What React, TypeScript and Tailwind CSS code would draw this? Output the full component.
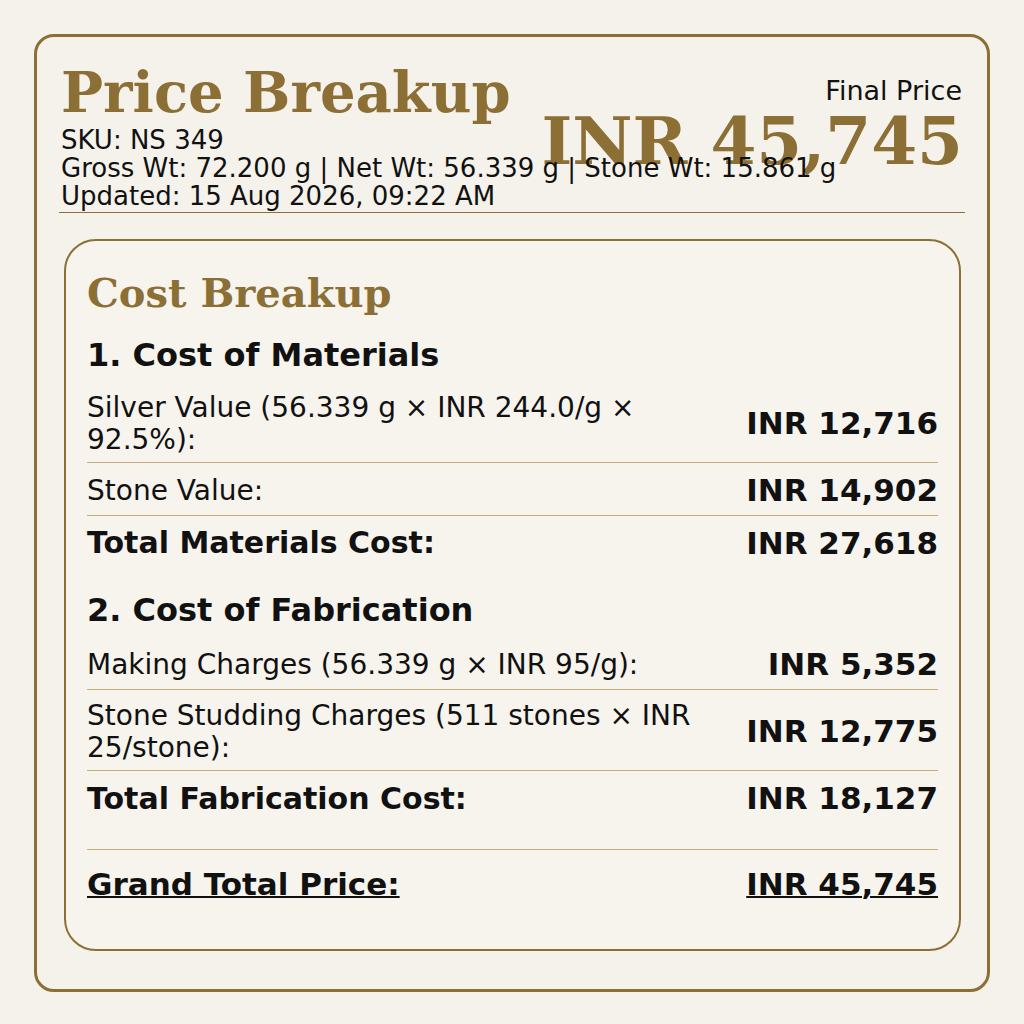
import React from 'react';

interface Line {
  label: string;
  value: string;
}

interface Section {
  title: string;
  lines: Line[];
  totalLabel: string;
  totalValue: string;
}

const sections: Section[] = [
  {
    title: '1. Cost of Materials',
    lines: [
      { label: 'Silver Value (56.339 g × INR 244.0/g × 92.5%):', value: 'INR 12,716' },
      { label: 'Stone Value:', value: 'INR 14,902' },
    ],
    totalLabel: 'Total Materials Cost:',
    totalValue: 'INR 27,618',
  },
  {
    title: '2. Cost of Fabrication',
    lines: [
      { label: 'Making Charges (56.339 g × INR 95/g):', value: 'INR 5,352' },
      { label: 'Stone Studding Charges (511 stones × INR 25/stone):', value: 'INR 12,775' },
    ],
    totalLabel: 'Total Fabrication Cost:',
    totalValue: 'INR 18,127',
  },
];

export default function App() {
  return (
    <div className="min-h-screen bg-[#f5f2eb] p-[34px] font-['DejaVu_Sans',sans-serif] text-[#111111]">
      <div className="rounded-[20px] border-[3px] border-[#8c6f35] px-[24px] pt-[26px] pb-[38px]">
        {/* Header */}
        <div className="flex justify-between">
          <div className="relative z-10 min-w-0 flex-1 whitespace-nowrap">
            <h1 className="mt-[1px] font-['DejaVu_Serif',serif] text-[56px] font-bold leading-none text-[#8c6f35]">
              Price Breakup
            </h1>
            <div className="mt-[6px] text-[26px] leading-[28px]">
              <p>SKU: NS 349</p>
              <p>Gross Wt: 72.200 g | Net Wt: 56.339 g | Stone Wt: 15.861 g</p>
              <p>Updated: 15 Aug 2026, 09:22 AM</p>
            </div>
          </div>
          <div className="shrink-0 pt-[14px] text-right">
            <p className="mr-[1px] text-[27px] leading-[28px]">Final Price</p>
            <p className="mt-[3px] font-['DejaVu_Serif',serif] text-[66px] font-bold leading-none text-[#8c6f35]">
              INR 45,745
            </p>
          </div>
        </div>
        <div className="-mx-[2px] mt-[2px] h-px bg-[#8c6f35]" />

        {/* Cost Breakup card */}
        <div className="mt-[26px] ml-[3px] mr-[2px] rounded-[32px] border-2 border-[#8c6f35] bg-[#f7f4ee] px-[21px] pt-[29px] pb-[46px]">
          <h2 className="font-['DejaVu_Serif',serif] text-[40px] font-bold leading-[1.15] text-[#8c6f35]">
            Cost Breakup
          </h2>

          {sections.map((section, i) => (
            <div key={section.title} className={i === 0 ? 'mt-[21px] mb-[25px]' : 'mb-[26px]'}>
              <h3 className="mb-[8px] text-[32px] font-bold leading-[1.15]">{section.title}</h3>
              {section.lines.map((line) => (
                <div
                  key={line.label}
                  className="flex items-center justify-between border-b border-[#c4ae7e] pt-[10px] pb-[6px]"
                >
                  <span className="min-w-0 flex-1 text-[28px] leading-[1.15]">{line.label}</span>
                  <span className="shrink-0 whitespace-nowrap pl-[24px] text-[31px] font-bold leading-[1.15]">
                    {line.value}
                  </span>
                </div>
              ))}
              <div className="flex items-center justify-between pt-[10px] pb-[6px]">
                <span className="text-[30px] font-bold leading-[1.15]">{section.totalLabel}</span>
                <span className="whitespace-nowrap text-[31px] font-bold leading-[1.15]">
                  {section.totalValue}
                </span>
              </div>
            </div>
          ))}

          {/* Grand total */}
          <div className="flex items-center justify-between border-t border-[#c4ae7e] pt-[17px]">
            <span className="text-[31px] font-bold leading-[1.15] underline decoration-2 underline-offset-[1px]">
              Grand Total Price:
            </span>
            <span className="whitespace-nowrap text-[31px] font-bold leading-[1.15] underline decoration-2 underline-offset-[1px]">
              INR 45,745
            </span>
          </div>
        </div>
      </div>
    </div>
  );
}
